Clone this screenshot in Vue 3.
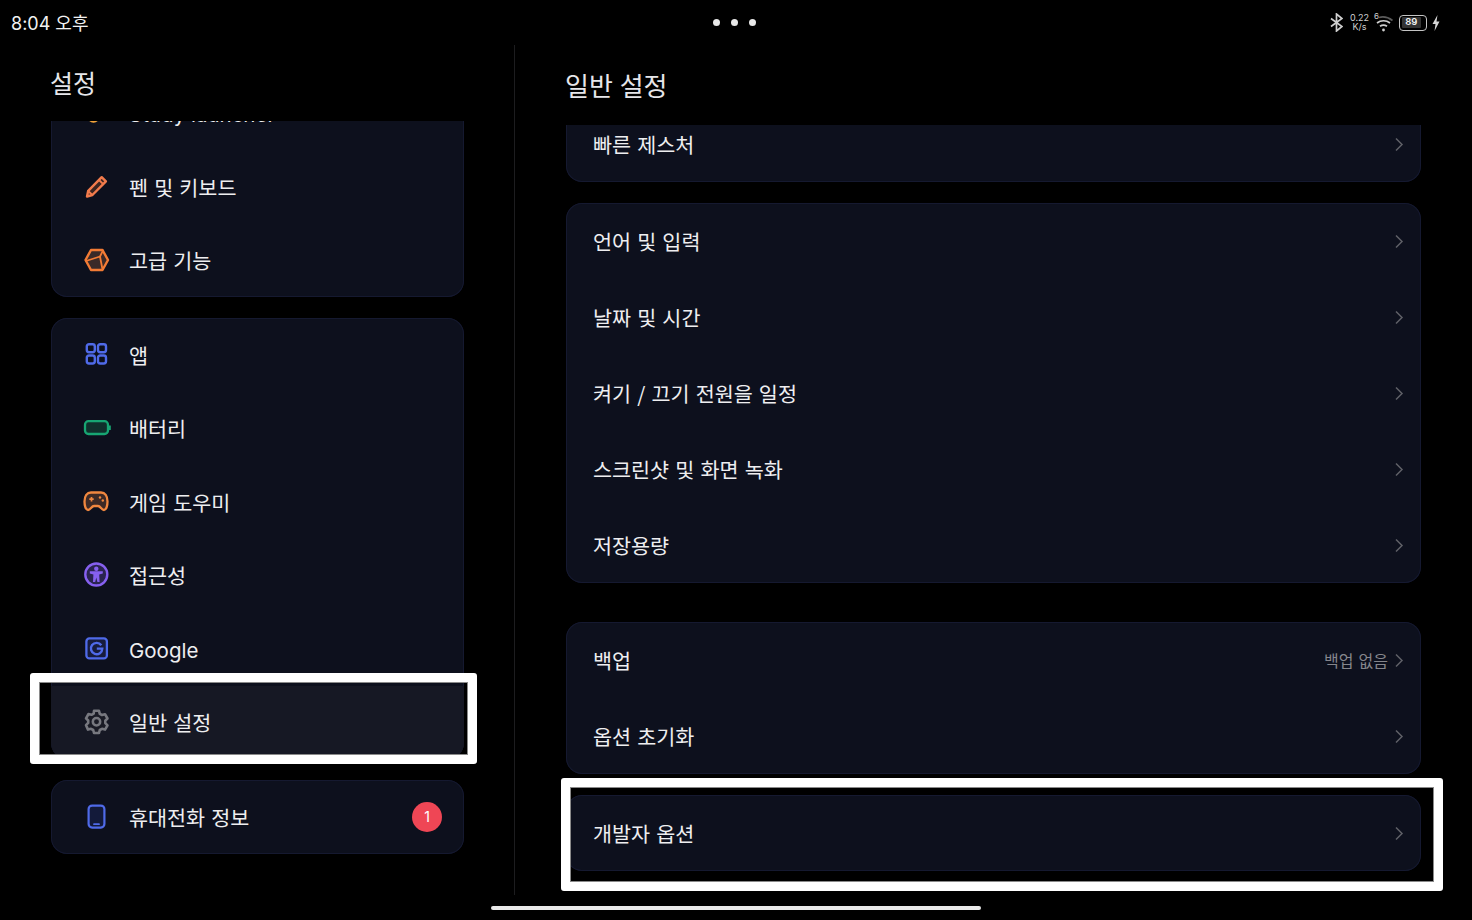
<template>
  <div class="screen">
    <header class="status-bar">
      <span class="clock">8:04 오후</span>
      <div class="dots"><i></i><i></i><i></i></div>
      <div class="status-icons">
        <svg class="bt" width="13" height="19" viewBox="0 0 13 19" fill="none" stroke="#cfcfcf" stroke-width="1.700">
          <path d="M1 5.500l11 8-5.500 4.500V1l5.500 4.500-11 8" />
        </svg>
        <div class="speed"><span>0.22</span><span>K/s</span></div>
        <div class="wifi">
          <span class="sim">6</span>
          <svg width="19" height="18" viewBox="0 0 19 18" fill="none" stroke="#cfcfcf" stroke-width="1.700">
            <path d="M5 3.500c4.500-1.300 9.500 0 13.500 3" stroke="#5a5a5a" />
            <path d="M3 9c3.800-3 9.200-3 13 0" />
            <path d="M6 12.300c2.100-1.500 4.900-1.500 7 0" />
            <circle cx="9.500" cy="16" r="1.400" fill="#cfcfcf" stroke="none" />
          </svg>
        </div>
        <div class="battery"><span>89</span></div>
        <svg class="bolt" width="8" height="16" viewBox="0 0 8 16"><path d="M5.500 0L0.500 9h3L2.500 16l5-9.500h-3z" fill="#d5d5d5" /></svg>
      </div>
    </header>

    <main class="panes">
      <section class="pane left">
        <h1 class="title">설정</h1>
        <div class="scroll">
          <div class="list left-list">
            <div v-for="(card, c) in leftCards" :key="c" class="card">
              <div v-for="row in card" :key="row.label" class="row side-row" :class="{ active: row.active }">
                <svg class="icon" width="26" height="26" viewBox="0 0 26 26" fill="none" stroke-linejoin="round" stroke-linecap="round">
                  <template v-if="row.icon === 'study'">
                    <circle cx="10.500" cy="16.800" r="6" fill="#f2a33a" />
                  </template>
                  <template v-else-if="row.icon === 'pen'">
                    <path d="M4 22.500L5.200 16.800 18.700 3.200l4.200 4.200L9.400 21z" fill="#3d2520" stroke="#f27b4c" stroke-width="2.400" />
                    <path d="M16 6l4.200 4.200M5.200 17L9.400 21" stroke="#f27b4c" stroke-width="1.800" />
                  </template>
                  <template v-else-if="row.icon === 'box'">
                    <path d="M2.500 13L8 3h11.500l5.500 10-5.500 10H8z" fill="#3a2a28" stroke="#f27b35" stroke-width="2.400" />
                    <path d="M3 14L17 9.500 20 3.500M17 9.500L19.500 22.500" stroke="#f27b35" stroke-width="1.800" />
                  </template>
                  <template v-else-if="row.icon === 'apps'">
                    <g stroke="#4f6ae8" stroke-width="2.400">
                      <rect x="3.800" y="2.300" width="8" height="8" rx="2.200" />
                      <rect x="15" y="2.300" width="8" height="8" rx="2.200" />
                      <rect x="3.800" y="13.500" width="8" height="8" rx="2.200" />
                      <rect x="15" y="13.500" width="8" height="8" rx="2.200" />
                    </g>
                  </template>
                  <template v-else-if="row.icon === 'battery'">
                    <rect x="2" y="6.200" width="23" height="12.800" rx="3.500" fill="#10302c" stroke="#17a673" stroke-width="2.300" />
                    <rect x="26" y="10.500" width="1.800" height="4.500" fill="#17a673" />
                  </template>
                  <template v-else-if="row.icon === 'game'">
                    <path d="M8 3.500h10c4 0 6.500 3.500 6.500 9 0 3.500-1 8.500-3.500 8.500-2.500 0-3.500-4-6-4h-4c-2.500 0-3.500 4-6 4-2.500 0-3.500-5-3.500-8.500 0-5.500 2.500-9 6.500-9z" fill="#3d2a26" stroke="#f0873f" stroke-width="2.300" />
                    <path d="M8.500 8v4.400M6.300 10.200h4.400" stroke="#f0873f" stroke-width="1.700" stroke-linecap="butt" />
                    <circle cx="17" cy="8.500" r="1.200" fill="#f0873f" />
                    <circle cx="19.800" cy="11.500" r="1.200" fill="#f0873f" />
                  </template>
                  <template v-else-if="row.icon === 'access'">
                    <circle cx="13.300" cy="12.500" r="11" fill="#2a2450" stroke="#8660ef" stroke-width="2.400" />
                    <circle cx="13.300" cy="6.800" r="2.200" fill="#8660ef" />
                    <path d="M6.800 9.300h13v2.100l-3.600 1.200.4 7.400h-2.200l-1.100-4.400-1.100 4.400H10l.4-7.400-3.600-1.200z" fill="#8660ef" />
                  </template>
                  <template v-else-if="row.icon === 'google'">
                    <rect x="3.400" y="2.400" width="20.500" height="20" rx="3" fill="#171c3c" stroke="#4f6ae8" stroke-width="2.300" />
                    <path d="M18.300 9.300a5.700 5.700 0 1 0 1 3.300H13.800" stroke="#4f6ae8" stroke-width="2.400" stroke-linecap="butt" stroke-linejoin="miter" />
                  </template>
                  <template v-else-if="row.icon === 'gear'">
                    <path d="M11 1.800h5l.8 3 2.200 1.200 3-.8 2.500 4.300-2.200 2.200v2.400l2.200 2.200-2.500 4.300-3-.8-2.200 1.200-.8 3h-5l-.8-3-2.200-1.200-3 .8L3 16.100l2.200-2.200v-2.400L3 9.300l2.500-4.300 3 .8 2.200-1.200z" fill="#1a1b25" stroke="#77787f" stroke-width="2.600" />
                    <circle cx="13.500" cy="12.700" r="3.700" stroke="#77787f" stroke-width="2.500" />
                  </template>
                  <template v-else-if="row.icon === 'phone'">
                    <rect x="5.600" y="1.600" width="15.800" height="22" rx="3.500" fill="#131a3a" stroke="#4f6ae8" stroke-width="2.200" />
                    <path d="M11 20.200h5" stroke="#4f6ae8" stroke-width="1.800" />
                  </template>
                </svg>
                <span class="label" :class="{ latin: row.latin }">{{ row.label }}</span>
                <span v-if="row.badge" class="badge">{{ row.badge }}</span>
              </div>
            </div>
          </div>
        </div>
      </section>

      <section class="pane right">
        <h2 class="title right-title">일반 설정</h2>
        <div class="scroll">
          <div class="list right-list">
            <div v-for="(card, c) in rightCards" :key="c" class="card" :class="card.cls">
              <div v-for="row in card.rows" :key="row.label" class="row main-row">
                <span class="label">{{ row.label }}</span>
                <span v-if="row.value" class="value">{{ row.value }}</span>
                <svg class="chev" width="10" height="15" viewBox="0 0 10 15" fill="none" stroke="#5f6067" stroke-width="1.500">
                  <path d="M2 1.500l6 6-6 6" />
                </svg>
              </div>
            </div>
          </div>
        </div>
      </section>
    </main>

    <div class="home-bar"></div>
    <div class="mark mark-general"></div>
    <div class="mark mark-dev"></div>
  </div>
</template>

<script setup>
const leftCards = [
  [
    { icon: "study", label: "Study launcher", latin: true },
    { icon: "pen", label: "펜 및 키보드" },
    { icon: "box", label: "고급 기능" }
  ],
  [
    { icon: "apps", label: "앱" },
    { icon: "battery", label: "배터리" },
    { icon: "game", label: "게임 도우미" },
    { icon: "access", label: "접근성" },
    { icon: "google", label: "Google", latin: true },
    { icon: "gear", label: "일반 설정", active: true }
  ],
  [{ icon: "phone", label: "휴대전화 정보", badge: "1" }]
];

const rightCards = [
  { rows: [{ label: "빠른 제스처" }] },
  {
    rows: [
      { label: "언어 및 입력" },
      { label: "날짜 및 시간" },
      { label: "켜기 / 끄기 전원을 일정" },
      { label: "스크린샷 및 화면 녹화" },
      { label: "저장용량" }
    ]
  },
  { cls: "far", rows: [{ label: "백업", value: "백업 없음" }, { label: "옵션 초기화" }] },
  { rows: [{ label: "개발자 옵션" }] }
];
</script>

<style>
html,
body {
  margin: 0;
  background: #000;
}
</style>

<style scoped>
.screen {
  position: relative;
  width: 1472px;
  height: 920px;
  overflow: hidden;
  display: flex;
  flex-direction: column;
  background: #000;
  color: #eeeef0;
  font-family: "Noto Sans CJK KR", "Noto Sans", sans-serif;
}

.status-bar {
  position: relative;
  flex: 0 0 45px;
  height: 45px;
  display: flex;
  justify-content: space-between;
  padding: 0 32px 0 11px;
}

.clock {
  font-size: 18px;
  line-height: 48px;
  height: 45px;
  color: #f2f2f2;
  font-family: "Inter", "Noto Sans CJK KR", sans-serif;
}

.dots {
  position: absolute;
  left: 713px;
  top: 19px;
  display: flex;
  gap: 11px;
}

.dots i {
  width: 7px;
  height: 7px;
  border-radius: 50%;
  background: #e8e8e8;
}

.status-icons {
  display: flex;
  align-items: center;
  height: 45px;
  color: #cfcfcf;
}

.bt {
  margin-right: 8px;
}

.speed {
  display: flex;
  flex-direction: column;
  align-items: center;
  width: 17px;
  margin-bottom: 2px;
  font-family: "Inter", sans-serif;
  font-size: 9px;
  line-height: 9px;
}

.wifi {
  position: relative;
  margin-left: 6px;
  width: 19px;
}

.wifi svg {
  display: block;
}

.sim {
  position: absolute;
  left: 0;
  top: -3px;
  font-size: 8px;
  line-height: 10px;
  font-family: "Inter", sans-serif;
}

.battery {
  box-sizing: border-box;
  margin-left: 6px;
  width: 28px;
  height: 16px;
  border: 1.500px solid #c4c4c4;
  border-radius: 4px;
  padding: 1.500px;
}

.battery span {
  display: block;
  height: 100%;
  width: 85%;
  border-radius: 1px;
  background: #333;
  color: #f2f2f2;
  font: 600 9.500px/10px "Inter", sans-serif;
  text-align: center;
}

.bolt {
  margin-left: 5px;
}

.panes {
  flex: 0 0 850px;
  height: 850px;
  display: flex;
  min-height: 0;
}

.pane {
  display: flex;
  flex-direction: column;
  min-height: 0;
}

.left {
  box-sizing: border-box;
  width: 515px;
  padding: 0 50px 0 51px;
  border-right: 1px solid #1d1d1f;
}

.right {
  flex: 1;
  padding: 0 51px;
}

.title {
  flex: 0 0 76px;
  height: 76px;
  margin: 0 0 0 -1px;
  font-size: 25px;
  font-weight: 400;
  line-height: 74px;
  color: #e6e6ea;
}

.right-title {
  flex-basis: 80px;
  height: 80px;
  font-size: 26px;
  line-height: 80px;
  word-spacing: 1px;
}

.scroll {
  flex: 1;
  min-height: 0;
  overflow: hidden;
}

.list {
  display: flex;
  flex-direction: column;
  gap: 21px;
}

.left-list {
  margin-top: -44.500px;
}

.right-list {
  margin-top: -19px;
}

.card {
  border-radius: 16px;
  overflow: hidden;
  background: #0d101d;
  box-shadow: inset 0 0 0 1px #151930;
}

.far {
  margin-top: 18px;
}

.row {
  display: flex;
  align-items: center;
  font-size: 20.700px;
  word-spacing: 1.500px;
}

.side-row {
  height: 73.500px;
  padding: 0 22px 0 32px;
}

.side-row.active {
  background: #161824;
}

.icon {
  flex: none;
  margin-right: 20px;
  overflow: visible;
}

.label {
  flex: 1;
}

.latin {
  padding-top: 3px;
  font-family: "Inter", sans-serif;
  font-size: 20.500px;
  word-spacing: 0;
}

.badge {
  width: 30px;
  height: 30px;
  border-radius: 50%;
  background: #ef4655;
  color: #fff;
  font-family: "Inter", sans-serif;
  font-size: 14px;
  line-height: 30px;
  text-align: center;
}

.main-row {
  height: 76px;
  padding: 0 17px 0 27px;
}

.value {
  margin-right: 6px;
  font-size: 16px;
  color: #85868c;
}

.chev {
  flex: none;
}

.home-bar {
  position: absolute;
  left: 491px;
  top: 906px;
  width: 490px;
  height: 4px;
  border-radius: 2px;
  background: #e9e9e9;
}

.mark {
  position: absolute;
  box-sizing: border-box;
  border: 9px solid #fff;
  border-radius: 3px;
  box-shadow: inset 0 0 0 1px #8a8a8a;
}

.mark-general {
  left: 30px;
  top: 673px;
  width: 447px;
  height: 91px;
}

.mark-dev {
  left: 561px;
  top: 778px;
  width: 882px;
  height: 113px;
}
</style>
